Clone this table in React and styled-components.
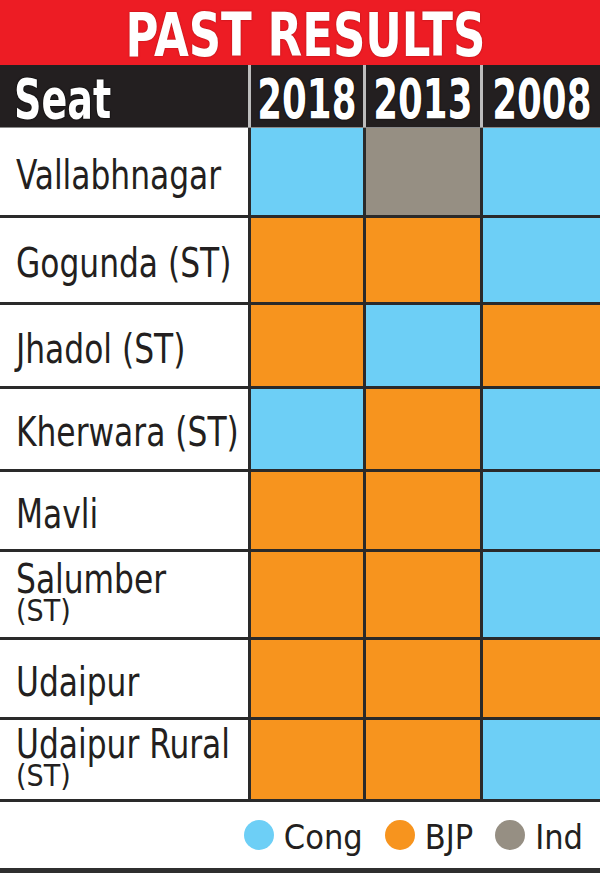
import React from "react";
import styled, { createGlobalStyle } from "styled-components";

const NARROW = `"DejaVu Sans Condensed", "DejaVu Sans", sans-serif`;

const COLORS = {
  c: "#6dcff6",
  b: "#f7941e",
  i: "#968f83",
};

const Global = createGlobalStyle`
  html, body { margin: 0; padding: 0; background: #ffffff; }
  body { width: 600px; font-family: ${NARROW}; }
`;

const Page = styled.div`
  width: 600px;
  height: 873px;
  display: flex;
  flex-direction: column;
  background: #ffffff;
  overflow: hidden;
`;

const TitleBar = styled.header`
  height: 65px;
  background: #ed1c24;
  display: flex;
  align-items: center;
  justify-content: center;
  padding-left: 10px;
  box-sizing: border-box;
`;

const Title = styled.h1`
  margin: 0;
  font-family: ${NARROW};
  font-weight: 700;
  font-size: 61px;
  line-height: 1;
  color: #ffffff;
  padding-top: 3px;
  white-space: nowrap;
  transform: scaleX(0.82);
  transform-origin: center;
  text-shadow: 0 0 2px rgba(110, 0, 0, 0.6);
`;

const HeadRow = styled.div`
  height: 63px;
  background: #bdbdbd;
  display: grid;
  grid-template-columns: 248px 112px 114px 1fr;
  column-gap: 3px;
  border-bottom: 1px solid #8a8a8a;
  box-sizing: border-box;
`;

const HeadCell = styled.div`
  background: #231f20;
  display: flex;
  align-items: center;
  justify-content: ${(p) => (p.$left ? "flex-start" : "center")};
  padding-left: ${(p) => (p.$left ? "14px" : "0")};
  padding-top: 6px;
  min-width: 0;
`;

const HeadLabel = styled.span`
  display: inline-block;
  flex-shrink: 0;
  font-family: ${NARROW};
  font-weight: 700;
  font-size: 55px;
  line-height: 1;
  color: #ffffff;
  white-space: nowrap;
  text-shadow: 0 0 2px #000, 0 0 1px #000;
  transform: scaleX(${(p) => p.$sx});
  transform-origin: ${(p) => (p.$left ? "left center" : "center")};
`;

const Body = styled.div`
  display: grid;
  grid-template-columns: 248px 112px 114px 1fr;
  grid-template-rows: ${(p) => p.$rows};
  gap: 3px;
  background: #2a2a2a;
  padding-bottom: 3px;
`;

const SeatCell = styled.div`
  background: #ffffff;
  display: flex;
  flex-direction: column;
  justify-content: center;
  align-items: flex-start;
  padding-left: 16px;
  padding-top: ${(p) => (p.$two ? "0" : "6px")};
  padding-bottom: ${(p) => (p.$two ? "4px" : "0")};
  color: #231f20;
  font-family: ${NARROW};
  min-width: 0;
`;

const SeatName = styled.span`
  display: inline-block;
  font-size: 40px;
  line-height: ${(p) => (p.$two ? "35px" : "1")};
  white-space: nowrap;
  transform: scaleX(0.87);
  transform-origin: left center;
`;

const SeatSub = styled.span`
  font-size: 30px;
  line-height: 27px;
`;

const ResultCell = styled.div`
  background: ${(p) => COLORS[p.$party]};
`;

const Legend = styled.footer`
  flex: 1;
  display: flex;
  align-items: center;
  justify-content: flex-end;
  padding-right: 17px;
  border-bottom: 5px solid #2f2f2f;
`;

const LegendItem = styled.div`
  display: flex;
  align-items: center;
  gap: 10px;
  margin-left: 22px;
  font-family: ${NARROW};
  font-size: 34px;
  color: #231f20;
  line-height: 1;
`;

const Dot = styled.span`
  width: 30px;
  height: 30px;
  border-radius: 50%;
  background: ${(p) => COLORS[p.$party]};
  display: inline-block;
`;

const LegendLabel = styled.span`
  padding-top: 4px;
`;

const rows = [
  { name: "Vallabhnagar", r: ["c", "i", "c"], h: 87 },
  { name: "Gogunda (ST)", r: ["b", "b", "c"], h: 84 },
  { name: "Jhadol (ST)", r: ["b", "c", "b"], h: 81 },
  { name: "Kherwara (ST)", r: ["c", "b", "c"], h: 80 },
  { name: "Mavli", r: ["b", "b", "c"], h: 77 },
  { name: "Salumber", sub: "(ST)", r: ["b", "b", "c"], h: 85 },
  { name: "Udaipur", r: ["b", "b", "b"], h: 77 },
  { name: "Udaipur Rural", sub: "(ST)", r: ["b", "b", "c"], h: 79 },
];

const years = ["2018", "2013", "2008"];

export default function App() {
  const template = rows.map((r) => `${r.h}px`).join(" ");
  return (
    <Page>
      <Global />
      <TitleBar>
        <Title>PAST RESULTS</Title>
      </TitleBar>
      <HeadRow>
        <HeadCell $left>
          <HeadLabel $left $sx={0.77}>Seat</HeadLabel>
        </HeadCell>
        {years.map((y) => (
          <HeadCell key={y}>
            <HeadLabel $sx={0.72}>{y}</HeadLabel>
          </HeadCell>
        ))}
      </HeadRow>
      <Body $rows={template}>
        {rows.map((row) => (
          <React.Fragment key={row.name}>
            <SeatCell $two={!!row.sub}>
              <SeatName $two={!!row.sub}>{row.name}</SeatName>
              {row.sub && <SeatSub>{row.sub}</SeatSub>}
            </SeatCell>
            {row.r.map((p, i) => (
              <ResultCell key={i} $party={p} />
            ))}
          </React.Fragment>
        ))}
      </Body>
      <Legend>
        <LegendItem>
          <Dot $party="c" />
          <LegendLabel>Cong</LegendLabel>
        </LegendItem>
        <LegendItem>
          <Dot $party="b" />
          <LegendLabel>BJP</LegendLabel>
        </LegendItem>
        <LegendItem>
          <Dot $party="i" />
          <LegendLabel>Ind</LegendLabel>
        </LegendItem>
      </Legend>
    </Page>
  );
}
